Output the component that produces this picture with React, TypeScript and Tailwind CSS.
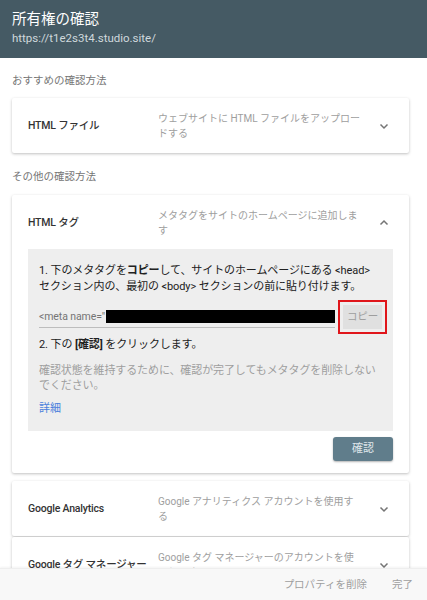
import React from "react";

type Method = {
  title: string;
  desc: string[];
};

const Chevron = ({ up = false }: { up?: boolean }) => (
  <svg
    width="12"
    height="12"
    viewBox="0 0 12 12"
    className="shrink-0"
    style={{ transform: up ? "rotate(180deg)" : undefined }}
  >
    <path d="M2.5 4.5 L6 8 L9.5 4.5" fill="none" stroke="#757575" strokeWidth="1.5" />
  </svg>
);

const MethodRow = ({ title, desc, up }: Method & { up?: boolean }) => (
  <div className="flex h-[55px] items-center pl-4 pr-[19px]">
    <div className="w-[130px] shrink-0 whitespace-nowrap text-[10.5px] font-medium tracking-[-0.2px] text-[#333333]">
      {title}
    </div>
    <div className="shrink-0 text-[10px] leading-[15px] text-[#9e9e9e]">
      {desc.map((line, i) => (
        <div key={i} className="whitespace-nowrap">
          {line}
        </div>
      ))}
    </div>
    <div className="flex flex-1 justify-end">
      <Chevron up={up} />
    </div>
  </div>
);

const App = () => {
  return (
    <div
      className="flex h-[600px] w-[427px] flex-col overflow-hidden bg-white"
      style={{ fontFamily: 'Roboto, "Noto Sans CJK JP", sans-serif' }}
    >
      <div className="flex h-[58px] shrink-0 flex-col justify-center bg-[#455a64] px-3 pb-[3px]">
        <div className="text-[14.5px] leading-[20px] text-white">所有権の確認</div>
        <div className="text-[11.5px] leading-[16px] text-[#cfd8dc]">https://t1e2s3t4.studio.site/</div>
      </div>

      <div className="min-h-0 flex-1 overflow-hidden pl-3 pr-[18px]">
        <div className="mt-[15px] text-[10.5px] leading-4 text-[#757575]">おすすめの確認方法</div>
        <div className="mt-[9px] rounded-[2px] bg-white shadow-[0_1px_3px_rgba(0,0,0,0.25)]">
          <MethodRow title="HTML ファイル" desc={["ウェブサイトに HTML ファイルをアップロー", "ドする"]} />
        </div>

        <div className="mt-4 text-[10.5px] leading-4 text-[#757575]">その他の確認方法</div>
        <div className="mt-[10px] rounded-[2px] bg-white pb-3 shadow-[0_1px_3px_rgba(0,0,0,0.25)]">
          <div className="-mb-px">
            <MethodRow title="HTML タグ" desc={["メタタグをサイトのホームページに追加しま", "す"]} up />
          </div>
          <div className="mx-4 bg-[#eeeeee] px-[11px] pb-[14px] pt-[14px] text-[11px] tracking-[-0.1px]">
            <p className="whitespace-nowrap leading-4 text-[#212121]">
              1. 下のメタタグを<span className="font-bold">コピー</span>して、サイトのホームページにある &lt;head&gt;
              <br />
              セクション内の、最初の &lt;body&gt; セクションの前に貼り付けます。
            </p>
            <div className="-mr-[5px] mt-[5px] flex items-center">
              <div className="flex h-[22px] flex-1 items-center border-b border-[#bdbdbd] text-[10.5px] text-[#757575]">
                &lt;meta name="
                <div className="ml-[1px] h-[13px] flex-1 bg-black" />
              </div>
              <div className="ml-[3px] flex h-[34px] w-[49px] items-center justify-center border-2 border-[#e0161b]">
                <div className="flex h-[24px] w-[39px] items-center justify-center bg-[#e0e0e0] text-[10.5px] text-[#9e9e9e]">
                  コピー
                </div>
              </div>
            </div>
            <p className="mt-[3px] leading-4 text-[#212121]">
              2. 下の <span className="font-bold">[確認]</span> をクリックします。
            </p>
            <p className="mt-[10px] whitespace-nowrap leading-[15px] text-[#9e9e9e]">
              確認状態を維持するために、確認が完了してもメタタグを削除しない
              <br />
              でください。
            </p>
            <div className="mt-[8px] leading-4 text-[#4a7fdc]">詳細</div>
          </div>
          <div className="mr-4 mt-[6px] flex justify-end">
            <div className="flex h-[24px] w-[60px] items-center justify-center rounded-[3px] bg-[#607d8b] text-[11px] text-[#dfe6ea] shadow-[0_1px_2px_rgba(0,0,0,0.3)]">
              確認
            </div>
          </div>
        </div>

        <div className="mt-2 rounded-[2px] bg-white shadow-[0_1px_3px_rgba(0,0,0,0.25)]">
          <MethodRow title="Google Analytics" desc={["Google アナリティクス アカウントを使用す", "る"]} />
        </div>
        <div className="mt-px rounded-[2px] bg-white shadow-[0_1px_3px_rgba(0,0,0,0.25)]">
          <MethodRow title="Google タグ マネージャー" desc={["Google タグ マネージャーのアカウントを使", "用します"]} />
        </div>
      </div>

      <div className="flex h-[32px] shrink-0 items-center justify-end gap-[25px] border-t border-[#eeeeee] bg-[#f8f8f8] pr-[14px] text-[10.5px] text-[#9e9e9e] shadow-[0_-1px_2px_rgba(0,0,0,0.05)]">
        <span>プロパティを削除</span>
        <span>完了</span>
      </div>
    </div>
  );
};

export default App;
